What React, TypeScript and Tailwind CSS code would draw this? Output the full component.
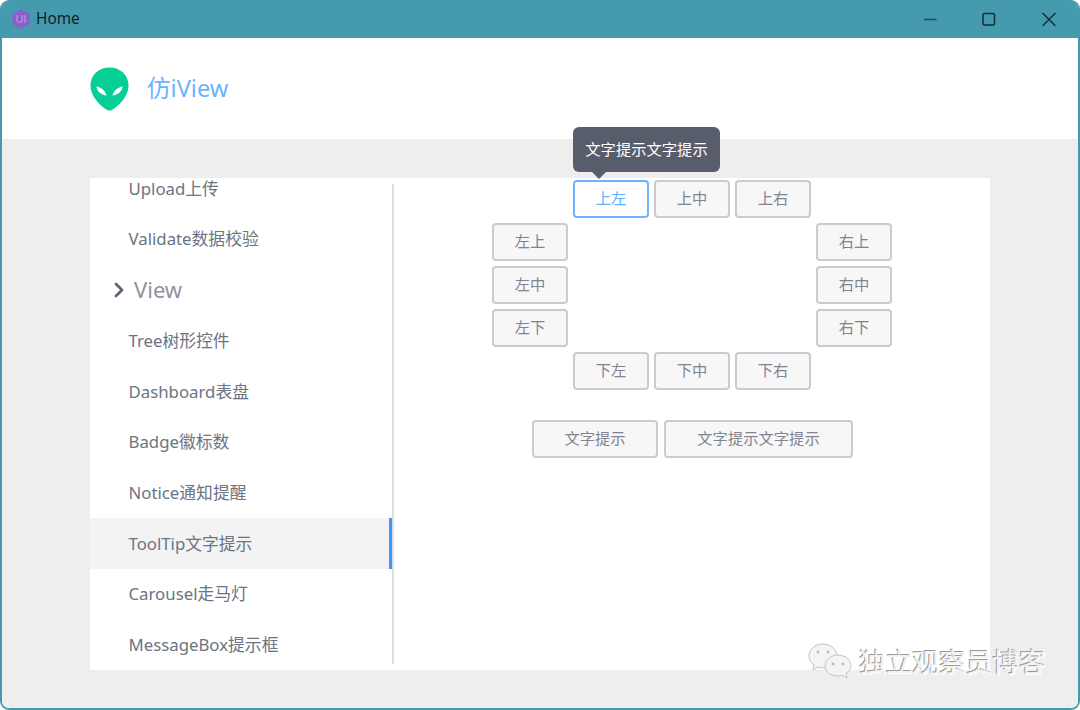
import React from 'react';
import { ChevronRight } from 'lucide-react';

const menu = [
  { name: 'Upload上传' },
  { name: 'Validate数据校验' },
  { name: 'View', group: true },
  { name: 'Tree树形控件' },
  { name: 'Dashboard表盘' },
  { name: 'Badge徽标数' },
  { name: 'Notice通知提醒' },
  { name: 'ToolTip文字提示', active: true },
  { name: 'Carousel走马灯' },
  { name: 'MessageBox提示框' },
];

const placements = [
  { label: '上左', cls: 'col-start-2 row-start-1', focus: true },
  { label: '上中', cls: 'col-start-3 row-start-1' },
  { label: '上右', cls: 'col-start-4 row-start-1' },
  { label: '左上', cls: 'col-start-1 row-start-2' },
  { label: '右上', cls: 'col-start-5 row-start-2' },
  { label: '左中', cls: 'col-start-1 row-start-3' },
  { label: '右中', cls: 'col-start-5 row-start-3' },
  { label: '左下', cls: 'col-start-1 row-start-4' },
  { label: '右下', cls: 'col-start-5 row-start-4' },
  { label: '下左', cls: 'col-start-2 row-start-5' },
  { label: '下中', cls: 'col-start-3 row-start-5' },
  { label: '下右', cls: 'col-start-4 row-start-5' },
];

const Btn: React.FC<{ label: string; className?: string; focus?: boolean }> = ({ label, className = '', focus }) => (
  <button
    className={`flex items-center justify-center rounded-[4px] border-2 pb-[1px] text-[15.3px] ${
      focus ? 'border-[#6cb4ff] bg-white text-[#5fafff]' : 'border-[#c9cbcf] bg-[#f7f7f7] text-[#80848f]'
    } ${className}`}
  >
    {label}
  </button>
);

const Alien = () => (
  <svg width="39" height="44" viewBox="0 0 40 44" preserveAspectRatio="none">
    <path d="M20 0.5C31 0.5 39.5 8 39.5 18.5C39.5 30 28 40 22.5 43C21 43.8 19 43.8 17.5 43C12 40 0.5 30 0.5 18.5C0.5 8 9 0.5 20 0.5Z" fill="#06cf96" />
    <path d="M6.5 19.5C11 20 15.5 23.5 17 28.5C11.5 28 7.5 24.5 6.5 19.5Z" fill="#fff" />
    <path d="M33.5 19.5C29 20 24.5 23.5 23 28.5C28.5 28 32.5 24.5 33.5 19.5Z" fill="#fff" />
  </svg>
);

export default function App() {
  return (
    <div className="relative w-[1080px] h-[710px] overflow-hidden bg-white font-['Noto_Sans','Noto_Sans_CJK_SC',sans-serif]">
      <div className="flex h-full flex-col overflow-hidden rounded-[9px] border-x-2 border-b-2 border-[#459aae]">
        {/* title bar */}
        <div className="-mx-[2px] flex h-[38px] shrink-0 items-center bg-[#459aae] pl-[11px] text-[#10202a]">
          <svg width="20" height="20" viewBox="0 0 20 20">
            <path d="M10 0.5L18.5 5V15L10 19.5L1.5 15V5Z" fill="#8b5ec9" />
            <text x="10" y="14" textAnchor="middle" fontSize="11" fontWeight="700" fill="#a98ad8" fontFamily="Liberation Sans">UI</text>
          </svg>
          <span className="ml-[5px] -mt-[1px] text-[15.4px]">Home</span>
          <div className="ml-auto flex items-center">
            <svg width="60" height="38" viewBox="0 0 60 38">
              <path d="M25 19.5H37.5" stroke="#24505c" strokeWidth="1.6" />
            </svg>
            <svg width="60" height="38" viewBox="0 0 60 38">
              <rect x="24" y="13.5" width="11.5" height="11.5" rx="1.5" fill="none" stroke="#10303a" strokeWidth="1.5" />
            </svg>
            <svg width="60" height="38" viewBox="0 0 60 38" className="mr-[1px]">
              <path d="M23.5 13L36.5 26M36.5 13L23.5 26" stroke="#10303a" strokeWidth="1.4" />
            </svg>
          </div>
        </div>

        {/* header */}
        <div className="flex h-[101px] shrink-0 items-center bg-white pl-[88px]">
          <Alien />
          <span className="ml-[18px] mt-[1px] text-[23.6px] text-[#6cb4ff]">仿iView</span>
        </div>

        {/* body */}
        <div className="flex-1 bg-[#eeeeee] px-[88px] pt-[39px]">
          <div className="flex h-[492px] w-[900px] bg-white">
            <div className="h-full w-[302px] shrink-0 overflow-hidden">
              <div className="-mt-[15px]">
                {menu.map((m) =>
                  m.group ? (
                    <div key={m.name} className="flex h-[50.7px] items-center pl-[17px] text-[22px] text-[#8f939c]">
                      <ChevronRight size={24} strokeWidth={2.8} className="text-[#5c6573]" />
                      <span className="ml-[3px]">{m.name}</span>
                    </div>
                  ) : (
                    <div
                      key={m.name}
                      className={`flex h-[50.7px] items-center pl-[38.5px] text-[16.8px] text-[#6b7482] ${
                        m.active ? 'border-r-[3px] border-[#3a97ff] bg-[#f3f3f3]' : ''
                      }`}
                    >
                      {m.name}
                    </div>
                  ),
                )}
              </div>
            </div>
            <div className="my-[6px] w-[2px] shrink-0 bg-[#d8dce6]" />

            <div className="relative flex-1 pl-[98px] pt-[2px]">
              <div className="grid grid-cols-[repeat(5,76px)] grid-rows-[repeat(5,38px)] gap-[5px]">
                {placements.map((p) => (
                  <Btn key={p.label} label={p.label} focus={p.focus} className={p.cls} />
                ))}
              </div>
              <div className="ml-[40px] mt-[30px] flex gap-[6px]">
                <Btn label="文字提示" className="h-[38px] w-[126px]" />
                <Btn label="文字提示文字提示" className="h-[38px] w-[189px]" />
              </div>

              {/* tooltip */}
              <div className="absolute left-[179px] top-[-51px] flex h-[45px] w-[147px] items-center justify-center rounded-[6px] bg-[#585d6b] text-[15.3px] text-white">
                文字提示文字提示
                <div className="absolute left-[19px] top-[45px] h-0 w-0 border-x-[7px] border-t-[7px] border-x-transparent border-t-[#585d6b]" />
              </div>
            </div>
          </div>
        </div>
      </div>

      {/* watermark */}
      <div className="absolute left-[807px] top-[642px] flex items-center">
        <svg width="46" height="40" viewBox="0 0 46 40" fill="#f4f4f4" stroke="#c4c4c4" strokeWidth="1">
          <path d="M16 2C8 2 2 7.5 2 14C2 18 4 21 7 23L6 28L11 25C13 25.6 15 26 17 26C23 26 30 21 30 14C30 7.5 24 2 16 2Z" />
          <path d="M31 13C24 13 18 18 18 24C18 30 24 34 31 34C32.5 34 34 33.8 35 33.3L40 36L39 31.5C42 29.5 44 27 44 24C44 18 38 13 31 13Z" />
          <circle cx="11" cy="10" r="1.4" fill="#bbb" stroke="none" />
          <circle cx="21" cy="10" r="1.4" fill="#bbb" stroke="none" />
          <circle cx="26" cy="22" r="1.4" fill="#bbb" stroke="none" />
          <circle cx="36" cy="22" r="1.4" fill="#bbb" stroke="none" />
        </svg>
        <span className="ml-[6px] text-[26.7px] leading-none text-[#f2f2f2] [text-shadow:-1px_-1px_0_#9a9a9a,1px_1px_0_#ffffff]">
          独立观察员博客
        </span>
      </div>
    </div>
  );
}
